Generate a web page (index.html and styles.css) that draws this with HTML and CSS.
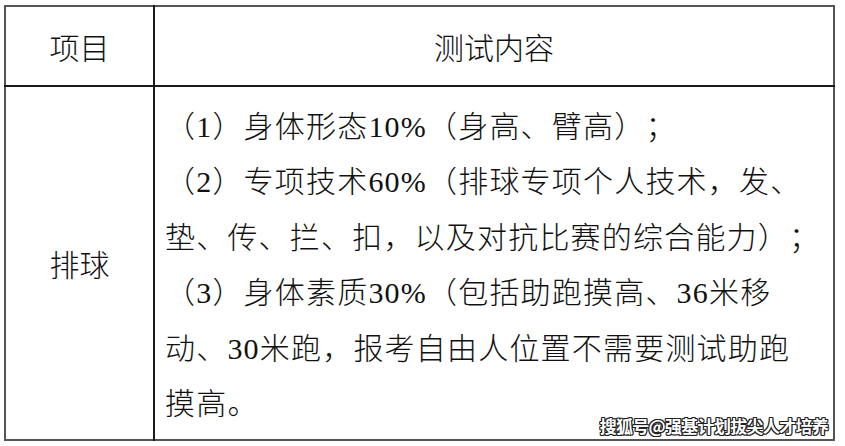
FILE: index.html
```html
<!DOCTYPE html>
<html lang="zh-CN">
<head>
<meta charset="utf-8">
<link rel="stylesheet" href="styles.css">
</head>
<body>
<div class="page">
  <table class="grid">
    <tr class="head">
      <td class="c1">项目</td>
      <td class="c2">测试内容</td>
    </tr>
    <tr class="body">
      <td class="c1">排球</td>
      <td class="c2 content">
        <p>（1）身体形态10%（身高、臂高）；</p>
        <p>（2）专项技术60%（排球专项个人技术，发、<br>垫、传、拦、扣，以及对抗比赛的综合能力）；</p>
        <p>（3）身体素质30%（包括助跑摸高、36米移<br>动、30米跑，报考自由人位置不需要测试助跑<br>摸高。</p>
      </td>
    </tr>
  </table>
  <div class="mark">搜狐号@强基计划拔尖人才培养</div>
</div>
</body>
</html>
```
FILE: styles.css
```css
html, body {
  margin: 0;
  padding: 0;
  background: #fff;
}
body {
  font-family: "Liberation Serif", "Noto Sans CJK SC", serif;
  color: #111;
  text-spacing-trim: space-all;
}
.page {
  position: relative;
  width: 845px;
  height: 446px;
  padding: 5px 0 0 4px;
  box-sizing: border-box;
}
.grid {
  border-collapse: collapse;
  width: 831px;
  height: 435px;
  border: 2px solid #555;
}
.grid td {
  padding: 0;
  font-size: 30px;
  font-weight: 300;
  vertical-align: middle;
}
.c1 {
  width: 147px;
  text-align: center;
  border-right: 2px solid #1a1a1a;
}
.head td {
  height: 78px;
  border-bottom: 2px solid #1a1a1a;
}
.head .c2 {
  text-align: center;
}
.content {
  padding: 12px 0 8px 10px !important;
  letter-spacing: 1.2px;
  line-height: 55.4px;
}
.content p {
  margin: 0;
}
.mark {
  position: absolute;
  right: 17px;
  bottom: 8px;
  font-family: "Noto Sans CJK SC", sans-serif;
  font-size: 17px;
  font-weight: 700;
  color: #fff;
  letter-spacing: -0.7px;
  text-shadow: 1px 0 0 #222, -1px 0 0 #222, 0 1px 0 #222, 0 -1px 0 #222, 1px 1px 0 #222, -1px -1px 0 #222, 1px -1px 0 #222, -1px 1px 0 #222;
}
```
